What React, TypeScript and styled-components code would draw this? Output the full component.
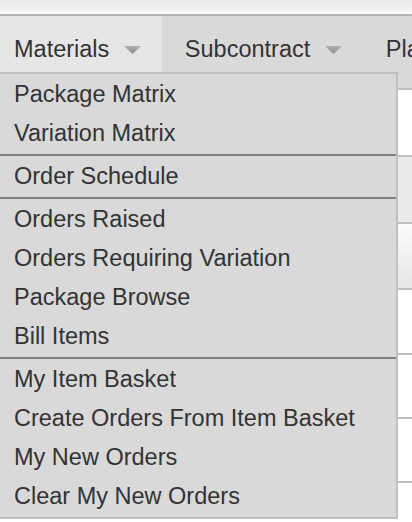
import React from "react";
import styled, { createGlobalStyle } from "styled-components";

const Global = createGlobalStyle`
  html, body { margin: 0; padding: 0; background: #ffffff; }
  body { font-family: "Liberation Sans", Arial, Helvetica, sans-serif; overflow: hidden; }
  * { box-sizing: border-box; }
`;

const Page = styled.div`
  position: relative;
  width: 412px;
  height: 522px;
  overflow: hidden;
  background: #ffffff;
`;

const TopStrip = styled.div`
  height: 14px;
  background: linear-gradient(#e8e8e8, #f3f3f3);
  border-bottom: 2px solid #ffffff;
`;

const NavBar = styled.nav`
  display: flex;
  height: 76px;
  background: #d9d9d9;
  border-top: 2px solid #b4b4b4;
  border-bottom: 2px solid #c0c0c0;
  white-space: nowrap;
`;

const Tab = styled.div<{ $active?: boolean; $first?: boolean }>`
  display: flex;
  align-items: flex-start;
  height: 56px;
  padding: 14px 21px 3px ${(p) => (p.$first ? "14px" : "23px")};
  background: ${(p) => (p.$active ? "#e6e6e6" : "transparent")};
  color: #333333;
  font-size: 23.5px;
  line-height: 39px;
`;

const Caret = styled.svg`
  flex: none;
  width: 17px;
  height: 8px;
  margin: 16px 0 0 14.5px;
`;

const Row = styled.div<{ $h: number; $bg: string }>`
  height: ${(p) => p.$h + 2}px;
  background: ${(p) => p.$bg};
  border-bottom: 2px solid #c0c0c0;
`;

const Menu = styled.div`
  position: absolute;
  top: 72px;
  left: -2px;
  width: 400px;
  background: #d9d9d9;
  border: 2px solid #c0c0c0;
  color: #333333;
  font-size: 23.5px;
  line-height: 39px;
`;

const Group = styled.div`
  padding: 1px 0;
  & + & {
    border-top: 2px solid #7f7f7f;
  }
`;

const Item = styled.div`
  height: 39px;
  padding-left: 14px;
  white-space: nowrap;
`;

const ArrowDown = () => (
  <Caret viewBox="0 0 17 8">
    <defs>
      <linearGradient id="cg" x1="0" y1="0" x2="0" y2="1">
        <stop offset="0" stopColor="#b0b0b0" />
        <stop offset="1" stopColor="#8c8c8c" />
      </linearGradient>
    </defs>
    <polygon points="0,0 17,0 8.5,8" fill="url(#cg)" />
  </Caret>
);

const groups: string[][] = [
  ["Package Matrix", "Variation Matrix"],
  ["Order Schedule"],
  ["Orders Raised", "Orders Requiring Variation", "Package Browse", "Bill Items"],
  ["My Item Basket", "Create Orders From Item Basket", "My New Orders", "Clear My New Orders"],
];

const rows: { h: number; bg: string }[] = [
  { h: 65, bg: "#ffffff" },
  { h: 65, bg: "#ebebeb" },
  { h: 64, bg: "linear-gradient(#fbfbfb, #e6e6e6)" },
  { h: 63, bg: "#ffffff" },
  { h: 62, bg: "#ffffff" },
  { h: 62, bg: "#ffffff" },
  { h: 62, bg: "#ffffff" },
];

export default function App() {
  return (
    <Page>
      <Global />
      <TopStrip />
      <NavBar>
        <Tab $active $first>
          <span>Materials</span>
          <ArrowDown />
        </Tab>
        <Tab>
          <span>Subcontract</span>
          <ArrowDown />
        </Tab>
        <Tab>
          <span>Planning</span>
          <ArrowDown />
        </Tab>
      </NavBar>
      {rows.map((r, i) => (
        <Row key={i} $h={r.h} $bg={r.bg} />
      ))}
      <Menu>
        {groups.map((g, gi) => (
          <Group key={gi}>
            {g.map((label) => (
              <Item key={label}>{label}</Item>
            ))}
          </Group>
        ))}
      </Menu>
    </Page>
  );
}
